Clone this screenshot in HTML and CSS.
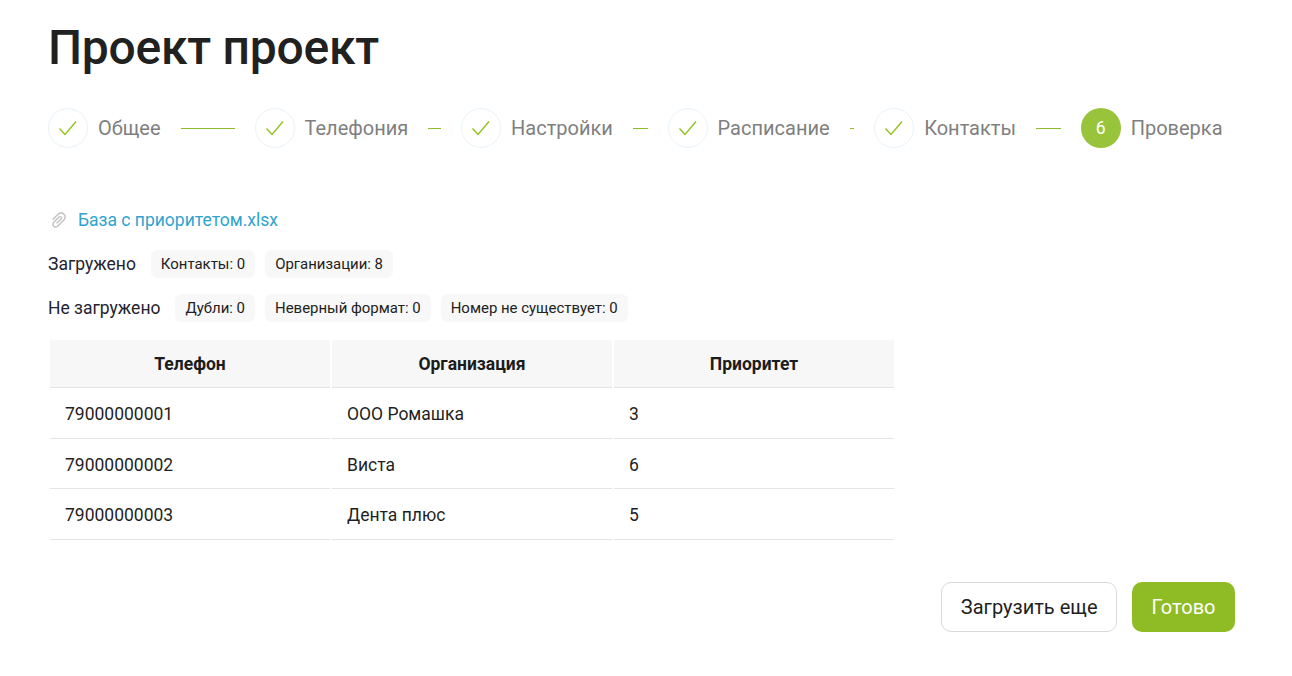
FILE: index.html
```html
<!DOCTYPE html>
<html lang="ru">
<head>
<meta charset="utf-8">
<title>Проект проект</title>
<link rel="stylesheet" href="styles.css">
</head>
<body>
<main class="page">
  <h1 class="title">Проект проект</h1>
  <ol class="steps">
    <li class="step"><span class="step-icon"><svg viewBox="0 0 20 20" width="20" height="20"><path d="M1.5 10.5 L7 16.5 L18 3.5"/></svg></span><span class="step-label">Общее</span><span class="step-line"></span></li>
    <li class="step"><span class="step-icon"><svg viewBox="0 0 20 20" width="20" height="20"><path d="M1.5 10.5 L7 16.5 L18 3.5"/></svg></span><span class="step-label">Телефония</span><span class="step-line"></span></li>
    <li class="step"><span class="step-icon"><svg viewBox="0 0 20 20" width="20" height="20"><path d="M1.5 10.5 L7 16.5 L18 3.5"/></svg></span><span class="step-label">Настройки</span><span class="step-line"></span></li>
    <li class="step"><span class="step-icon"><svg viewBox="0 0 20 20" width="20" height="20"><path d="M1.5 10.5 L7 16.5 L18 3.5"/></svg></span><span class="step-label">Расписание</span><span class="step-line"></span></li>
    <li class="step"><span class="step-icon"><svg viewBox="0 0 20 20" width="20" height="20"><path d="M1.5 10.5 L7 16.5 L18 3.5"/></svg></span><span class="step-label">Контакты</span><span class="step-line"></span></li>
    <li class="step step-last"><span class="step-icon step-icon-active">6</span><span class="step-label">Проверка</span></li>
  </ol>
  <div class="file">
    <svg class="clip" viewBox="64 64 896 896" width="18" height="18"><path d="M779.3 196.6c-94.2-94.2-247.6-94.2-341.7 0l-261 260.8c-1.7 1.7-2.6 4-2.6 6.4s.9 4.7 2.6 6.4l36.9 36.9a9 9 0 0 0 12.7 0l261-260.8c32.4-32.4 75.5-50.2 121.3-50.2s88.9 17.8 121.2 50.2c32.4 32.4 50.2 75.5 50.2 121.2 0 45.8-17.8 88.8-50.2 121.2l-266 265.9-43.1 43.1c-40.3 40.3-105.8 40.3-146.1 0-19.5-19.5-30.2-45.4-30.2-73s10.7-53.5 30.2-73l263.9-263.8c6.7-6.6 15.5-10.3 24.9-10.3h.1c9.4 0 18.1 3.7 24.7 10.3 6.7 6.7 10.3 15.5 10.3 24.9 0 9.3-3.7 18.1-10.3 24.7L372.4 653c-1.7 1.7-2.6 4-2.6 6.4s.9 4.7 2.6 6.4l36.9 36.9a9 9 0 0 0 12.7 0l215.6-215.6c19.9-19.9 30.8-46.3 30.8-74.4s-11-54.6-30.8-74.4c-41.1-41.1-107.9-41-149 0L463 364 224.8 602.1A172.22 172.22 0 0 0 174 724.8c0 46.3 18.1 89.8 50.8 122.5 33.9 33.8 78.3 50.7 122.7 50.7 44.4 0 88.8-16.9 122.6-50.7l309.2-309C824.8 492.7 850 432 850 367.5c.1-64.6-25.1-125.3-70.7-170.9z"/></svg>
    <a class="file-link" href="#">База с приоритетом.xlsx</a>
  </div>
  <div class="stat-row stat-row-first">
    <span class="stat-label">Загружено</span>
    <span class="tag">Контакты: 0</span>
    <span class="tag">Организации: 8</span>
  </div>
  <div class="stat-row">
    <span class="stat-label">Не загружено</span>
    <span class="tag">Дубли: 0</span>
    <span class="tag">Неверный формат: 0</span>
    <span class="tag">Номер не существует: 0</span>
  </div>
  <table class="table">
    <thead>
      <tr><th>Телефон</th><th>Организация</th><th>Приоритет</th></tr>
    </thead>
    <tbody>
      <tr><td>79000000001</td><td>ООО Ромашка</td><td>3</td></tr>
      <tr><td>79000000002</td><td>Виста</td><td>6</td></tr>
      <tr><td>79000000003</td><td>Дента плюс</td><td>5</td></tr>
    </tbody>
  </table>
  <div class="actions">
    <button class="btn btn-default" type="button">Загрузить еще</button>
    <button class="btn btn-primary" type="button">Готово</button>
  </div>
</main>
</body>
</html>
```
FILE: styles.css
```css
* { box-sizing: border-box; }
html, body { margin: 0; padding: 0; background: #fff; }
body { font-family: Roboto, "Noto Sans", sans-serif; color: #1f1f1f; font-size: 16px; overflow: hidden; }
.page { padding: 18px 57px 0 48px; height: 676px; }
.title { margin: 0; font-size: 48px; letter-spacing: -0.25px; line-height: 60px; font-weight: 500; color: #212121; }
.steps { list-style: none; display: flex; margin: 30px 0 0; padding: 0; width: 1174.5px; }
.step { flex: 1 1 0; min-width: 0; display: flex; align-items: center; }
.step-last { flex: none; }
.step-icon { flex: none; width: 40px; height: 40px; border-radius: 50%; border: 1px solid #e8f3fb; display: flex; align-items: center; justify-content: center; }
.step-icon svg { fill: none; stroke: #8fc31f; stroke-width: 1.4; }
.step-icon-active { background: #98c43c; border: 0; color: #fff; font-size: 17.5px; }
.step-label { flex: none; margin-left: 10px; font-size: 20px; line-height: 32px; color: #7f7f7f; }
.step-line { flex: 1 1 0; height: 1px; background: #8fbc2a; margin: 0 20px; }
.file { display: flex; align-items: center; margin-top: 56px; height: 32px; padding-left: 2px; }
.clip { fill: #c2c2c2; }
.file-link { margin-left: 10px; font-size: 17.5px; line-height: 24px; color: #2fa3cf; text-decoration: none; }
.stat-row { display: flex; align-items: center; height: 28px; margin-top: 16px; }
.stat-row-first { margin-top: 14px; }
.stat-label { font-size: 17.5px; line-height: 24px; margin-right: 5px; color: #1f2430; }
.tag { margin-left: 10px; height: 28px; padding: 0 10px; border-radius: 6px; background: #f8f8f8; font-size: 14.95px; line-height: 28px; color: #222; white-space: nowrap; }
.table { width: 848px; margin-top: 18px; border-collapse: separate; border-spacing: 2px 0; table-layout: fixed; }
.table th { height: 48px; padding: 0 15px; background: #f7f7f7; border-bottom: 1px solid #e4e4e4; font-size: 17.5px; font-weight: 700; color: #1c1c1c; text-align: center; }
.table td { height: 50.5px; padding: 2.6px 15px 0; border-bottom: 1px solid #e4e4e4; font-size: 17.5px; color: #1f1f1f; }
.actions { display: flex; justify-content: flex-end; gap: 15px; margin-top: 42px; }
.btn { height: 50px; border-radius: 10px; font-family: inherit; font-size: 20px; padding: 0 18.5px; }
.btn-default { background: #fff; border: 1px solid #d9d9d9; color: #1f1f1f; }
.btn-primary { background: #8fbc24; border: 0; color: #fff; padding: 0 19.5px; }
```
